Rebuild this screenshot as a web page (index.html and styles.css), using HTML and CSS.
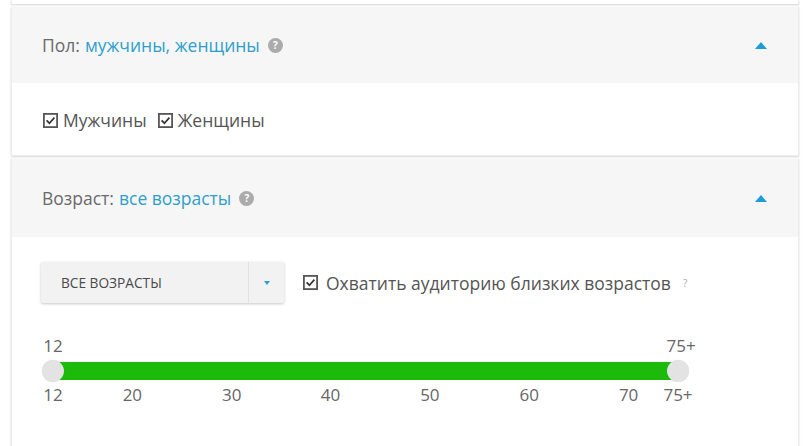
FILE: index.html
```html
<!DOCTYPE html>
<html lang="ru">
<head>
<meta charset="utf-8">
<link rel="stylesheet" href="styles.css">
</head>
<body>
<div class="page">
  <div class="prev"></div>

  <section class="card">
    <header class="card-head">
      <div class="title"><span class="label">Пол:</span> <span class="value">мужчины, женщины</span> <span class="help">?</span></div>
      <span class="caret"></span>
    </header>
    <div class="card-body body-gender">
      <label class="check"><svg class="box" width="15" height="15" viewBox="0 0 15 15"><rect x="0.9" y="0.9" width="13.2" height="13.2" fill="#fff" stroke="#555" stroke-width="1.8"/><path d="M3.6 7.4 L6.4 10.2 L11.4 4.6" fill="none" stroke="#333" stroke-width="1.7"/></svg>Мужчины</label>
      <label class="check"><svg class="box" width="15" height="15" viewBox="0 0 15 15"><rect x="0.9" y="0.9" width="13.2" height="13.2" fill="#fff" stroke="#555" stroke-width="1.8"/><path d="M3.6 7.4 L6.4 10.2 L11.4 4.6" fill="none" stroke="#333" stroke-width="1.7"/></svg>Женщины</label>
    </div>
  </section>

  <section class="card">
    <header class="card-head head2">
      <div class="title"><span class="label">Возраст:</span> <span class="value">все возрасты</span> <span class="help">?</span></div>
      <span class="caret"></span>
    </header>
    <div class="card-body body-age">
      <div class="age-row">
        <div class="select">
          <span class="select-text">ВСЕ ВОЗРАСТЫ</span>
          <span class="select-btn"><span class="mini-caret"></span></span>
        </div>
        <label class="check check-wide"><svg class="box" width="15" height="15" viewBox="0 0 15 15"><rect x="0.9" y="0.9" width="13.2" height="13.2" fill="#fff" stroke="#555" stroke-width="1.8"/><path d="M3.6 7.4 L6.4 10.2 L11.4 4.6" fill="none" stroke="#333" stroke-width="1.7"/></svg>Охватить аудиторию близких возрастов</label>
        <span class="q">?</span>
      </div>
      <div class="slider">
        <div class="scale top">
          <span class="tick" style="left:0%">12</span>
          <span class="tick" style="left:100.5%">75+</span>
        </div>
        <div class="track">
          <span class="knob" style="left:0%"></span>
          <span class="knob" style="left:100%"></span>
        </div>
        <div class="scale bottom">
          <span class="tick" style="left:0%">12</span>
          <span class="tick" style="left:12.7%">20</span>
          <span class="tick" style="left:28.6%">30</span>
          <span class="tick" style="left:44.4%">40</span>
          <span class="tick" style="left:60.3%">50</span>
          <span class="tick" style="left:76.2%">60</span>
          <span class="tick" style="left:92.1%">70</span>
          <span class="tick" style="left:100%">75+</span>
        </div>
      </div>
    </div>
  </section>
</div>
</body>
</html>
```

FILE: styles.css
```css
* { box-sizing: border-box; }
html, body { margin: 0; padding: 0; background: #fff; }
body {
  font-family: "Open Sans", "Noto Sans", sans-serif;
  color: #555;
  overflow: hidden;
  height: 446px;
}
.page {
  padding: 0 5px 0 11px;
}
.prev {
  height: 4px;
  background: #fff;
  border-left: 1px solid #eee;
  border-right: 1px solid #eee;
  box-shadow: 0 1px 2px rgba(0,0,0,0.18);
  margin-bottom: 3px;
}
.card {
  background: #fff;
  border: 1px solid #ececec;
  border-top: 0;
  box-shadow: 0 1px 2px rgba(0,0,0,0.16);
  margin-bottom: 3px;
}
.card-head {
  height: 76px;
  background: #f6f6f6;
  display: flex;
  align-items: center;
  justify-content: space-between;
  padding: 0 30px 0 30px;
}
.head2 { height: 78px; }
.title {
  font-size: 17.5px;
  display: flex;
  align-items: center;
  gap: 5px;
}
.label { color: #6a6a6a; }
.value { color: #2e9fcc; }
.help {
  width: 15px;
  height: 15px;
  border-radius: 50%;
  background: #ababab;
  color: #fff;
  font-size: 10px;
  font-weight: 700;
  display: inline-flex;
  align-items: center;
  justify-content: center;
  margin-left: 3px;
  line-height: 1;
}
.caret {
  width: 0;
  height: 0;
  border-left: 6.5px solid transparent;
  border-right: 6.5px solid transparent;
  border-bottom: 7px solid #1a9ddb;
  margin-right: 1px;
}
.card-body { padding: 0 30px; }
.body-gender {
  height: 72px;
  display: flex;
  align-items: center;
  gap: 10px;
  padding-top: 2px;
}
.check {
  display: inline-flex;
  align-items: center;
  gap: 5px;
  font-size: 17.5px;
  color: #555;
}
.check-wide { gap: 8px; }
.box { flex: none; margin-left: 1px; }
.body-age {
  height: 212px;
  padding-top: 25px;
}
.age-row {
  display: flex;
  align-items: center;
}
.select {
  width: 243px;
  height: 41px;
  margin-left: -1px;
  background: #f2f2f2;
  border-radius: 2px;
  box-shadow: 0 1px 3px rgba(0,0,0,0.22);
  display: flex;
  margin-right: 18px;
}
.select-text {
  flex: 1;
  display: flex;
  align-items: center;
  padding-left: 20px;
  font-size: 13.7px;
  color: #4a4a4a;
}
.select-btn {
  width: 36px;
  border-left: 1px solid #e2e2e2;
  display: flex;
  align-items: center;
  justify-content: center;
}
.mini-caret {
  width: 0;
  height: 0;
  border-left: 3px solid transparent;
  border-right: 3px solid transparent;
  border-top: 4px solid #2e9fcc;
}
.q {
  font-size: 10px;
  color: #aaa;
  margin-left: 12px;
  margin-top: 1px;
}
.slider {
  margin-left: 11px;
  width: 625px;
  margin-top: 31px;
}
.scale {
  position: relative;
  height: 24px;
  font-size: 17px;
  color: #666;
}
.tick {
  position: absolute;
  top: 0;
  transform: translateX(-50%);
  white-space: nowrap;
  line-height: 24px;
}
.track {
  position: relative;
  height: 18px;
  background: #1cbb0b;
  margin-top: 4px;
  margin-bottom: 3px;
}
.knob {
  position: absolute;
  top: 50%;
  width: 22px;
  height: 22px;
  border-radius: 50%;
  background: #e3e3e3;
  box-shadow: 0 0 1px rgba(0,0,0,0.15);
  transform: translate(-50%, -50%);
}
```
